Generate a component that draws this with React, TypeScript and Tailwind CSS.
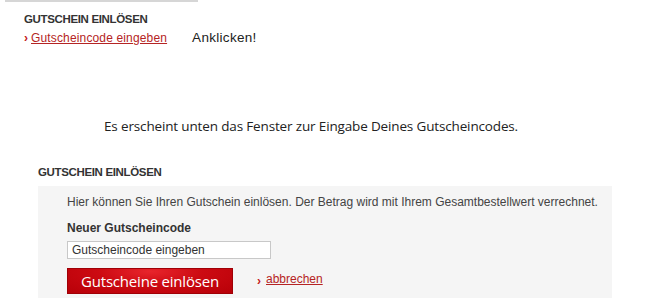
export default function App() {
  return (
    <div className="relative w-[650px] h-[302px] bg-white overflow-hidden font-['Liberation_Sans',Arial,sans-serif] text-[#333]">
      <div className="ml-[5px] w-[193px] h-[2px] bg-[#d6d6d6]" />

      <div className="pl-[24px] pt-[10px]">
        <h2 className="text-[11.5px] font-bold leading-[14px] tracking-[-0.35px] text-[#333]">GUTSCHEIN EINLÖSEN</h2>
        <div className="mt-[5px] flex items-center text-[12px] leading-[14px]">
          <span className="text-[#c41a1a] font-bold text-[12px] mr-[3px]">›</span>
          <a className="text-[#b52424] underline tracking-[0.15px]">Gutscheincode eingeben</a>
          <span className="ml-[25px] text-[13.5px] text-[#222] tracking-[0.3px]">Anklicken!</span>
        </div>
      </div>

      <p className="mt-[73px] pl-[104px] text-[13.5px] leading-[16px] text-[#222] font-['Open_Sans',sans-serif] tracking-[-0.15px]">
        Es erscheint unten das Fenster zur Eingabe Deines Gutscheincodes.
      </p>

      <div className="mt-[31px] pl-[38px]">
        <h2 className="text-[11.5px] font-bold leading-[14px] tracking-[-0.35px] text-[#333]">GUTSCHEIN EINLÖSEN</h2>
        <div className="mt-[7px] w-[574px] h-[112px] bg-[#f5f5f5] pl-[29px] pt-[9px]">
          <p className="text-[12px] leading-[14px] text-[#444]">
            Hier können Sie Ihren Gutschein einlösen. Der Betrag wird mit Ihrem Gesamtbestellwert verrechnet.
          </p>
          <p className="mt-[12px] text-[12px] leading-[14px] font-bold text-[#333]">Neuer Gutscheincode</p>
          <div className="mt-[6px] w-[204px] h-[18px] bg-white border border-[#c8c8c8] pl-[4px] text-[12px] leading-[16px] text-[#333]">
            Gutscheincode eingeben
          </div>
          <div className="mt-[9px] flex items-center">
            <button className="w-[166px] h-[26px] bg-[radial-gradient(ellipse_at_50%_10%,#e8252c_0%,#cc0a12_45%,#b80008_100%)] border border-[#a00006] text-white text-[15px] leading-[24px] font-['Open_Sans',sans-serif] font-medium tracking-[-0.2px]">
              Gutscheine einlösen
            </button>
            <span className="ml-[24px] text-[#c41a1a] font-bold text-[12px] mr-[5px]">›</span>
            <a className="text-[#b52424] underline text-[12px] leading-[14px] -mt-[4px]">abbrechen</a>
          </div>
        </div>
      </div>
    </div>
  );
}
